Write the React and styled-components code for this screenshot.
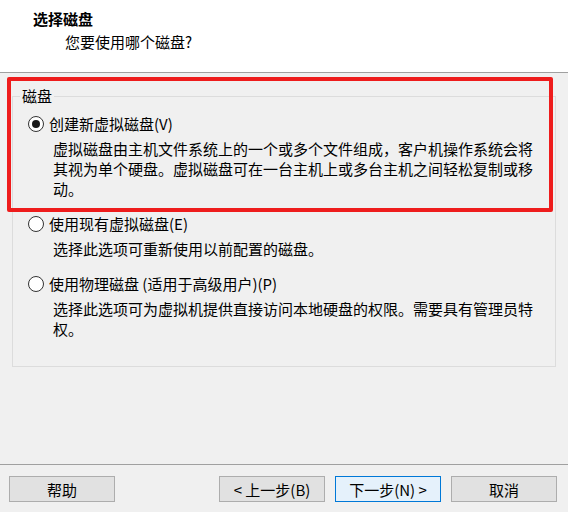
import React from "react";
import styled, { createGlobalStyle } from "styled-components";

const GlobalStyle = createGlobalStyle`
    body{
        margin: 0;
        background: #f0f0f0;
        font-family: "Noto Sans CJK SC", "Noto Sans", sans-serif;
    }
`;

const options = [
    {
        id: "new",
        label: "创建新虚拟磁盘(V)",
        desc: "虚拟磁盘由主机文件系统上的一个或多个文件组成，客户机操作系统会将其视为单个硬盘。虚拟磁盘可在一台主机上或多台主机之间轻松复制或移动。",
        checked: true,
    },
    {
        id: "existing",
        label: "使用现有虚拟磁盘(E)",
        desc: "选择此选项可重新使用以前配置的磁盘。",
    },
    {
        id: "physical",
        label: "使用物理磁盘 (适用于高级用户)(P)",
        desc: "选择此选项可为虚拟机提供直接访问本地硬盘的权限。需要具有管理员特权。",
    },
];

export default function App(){
    return(
        <>
            <GlobalStyle/>
            <Dialog>
                <Header>
                    <Title>选择磁盘</Title>
                    <Subtitle>您要使用哪个磁盘?</Subtitle>
                </Header>

                <Main>
                    <GroupBox>
                        <Legend>磁盘</Legend>
                        <OptionList>
                            {options.map((o)=>(
                                <Option key={o.id}>
                                    <RadioRow>
                                        <Radio type="radio" name="disk" defaultChecked={o.checked}/>
                                        <span>{o.label}</span>
                                    </RadioRow>
                                    <Desc>{o.desc}</Desc>
                                </Option>
                            ))}
                        </OptionList>
                    </GroupBox>
                    <Highlight/>
                </Main>

                <Footer>
                    <Button>帮助</Button>
                    <Spacer/>
                    <Button>&lt; 上一步(B)</Button>
                    <Button $primary>下一步(N) &gt;</Button>
                    <Button>取消</Button>
                </Footer>
            </Dialog>
        </>
    )
}

const Dialog = styled.div`
    width: 568px;
    height: 512px;
    display: flex;
    flex-direction: column;
    background: #f0f0f0;
    color: #000;
    font-size: 15px;
    line-height: 20px;
`

const Header = styled.div`
    height: 63px;
    padding-top: 9px;
    background: #ffffff;
    border-bottom: 1px solid #a0a0a0;
`

const Title = styled.div`
    padding-left: 33px;
    font-weight: bold;
`

const Subtitle = styled.div`
    margin-top: 3px;
    padding-left: 65px;
`

const Main = styled.div`
    flex: 1;
    position: relative;
    padding-top: 13px;
`

const GroupBox = styled.fieldset`
    margin: 0 0 0 12px;
    padding: 0;
    width: 544px;
    height: 281px;
    box-sizing: border-box;
    border: 1px solid #dcdcdc;
    min-width: 0;
`

const Legend = styled.legend`
    margin-left: 7px;
    padding: 0 2px;
    line-height: 20px;
`

const OptionList = styled.div`
    display: flex;
    flex-direction: column;
    gap: 15px;
    padding: 8px 0 0 15px;
`

const Option = styled.div`
    display: flex;
    flex-direction: column;
    gap: 5px;
`

const RadioRow = styled.label`
    display: flex;
    align-items: center;
    gap: 5px;
    height: 20px;
`

const Radio = styled.input`
    appearance: none;
    margin: 0;
    width: 16px;
    height: 16px;
    border: 1px solid #333333;
    border-radius: 50%;
    background: #ffffff;
    box-sizing: border-box;
    display: grid;
    place-items: center;

    &:checked::after{
        content: "";
        width: 8px;
        height: 8px;
        border-radius: 50%;
        background: #1a1a1a;
    }
`

const Desc = styled.p`
    margin: 0 0 0 25px;
    width: 486px;
`

const Highlight = styled.div`
    position: absolute;
    left: 7px;
    top: 4px;
    width: 546px;
    height: 135px;
    box-sizing: border-box;
    border: 4px solid #ee1c1c;
    border-radius: 2px;
    pointer-events: none;
`

const Footer = styled.div`
    display: flex;
    gap: 10px;
    border-top: 1px solid #a0a0a0;
    padding: 11px 11px 10px 9px;
`

const Spacer = styled.div`
    flex: 1;
`

const Button = styled.button`
    width: 106px;
    height: 26px;
    padding: 0;
    font-family: inherit;
    font-size: 15px;
    color: #000;
    background: ${p => p.$primary ? "#e5f1fb" : "#e1e1e1"};
    border: 1px solid ${p => p.$primary ? "#0078d7" : "#adadad"};
`
